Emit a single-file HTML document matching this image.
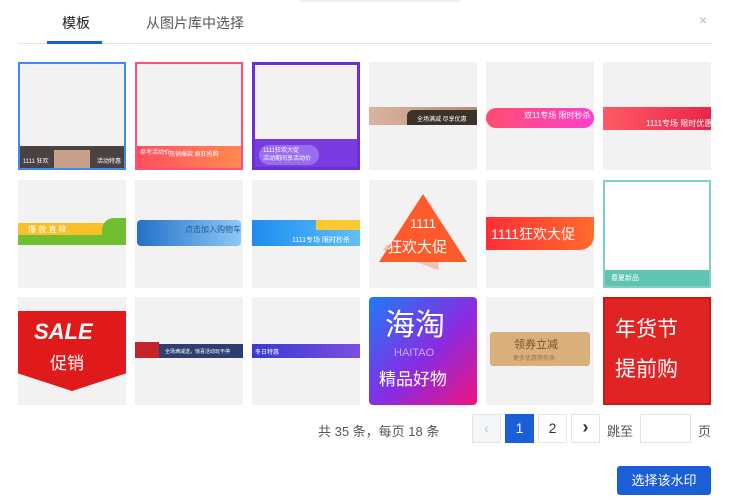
<!DOCTYPE html>
<html><head><meta charset="utf-8"><style>
*{margin:0;padding:0;box-sizing:border-box}
body{width:730px;height:500px;background:#fff;font-family:"Liberation Sans","Noto Sans CJK SC",sans-serif;position:relative;overflow:hidden;color:#333}
.a{position:absolute}
.c{position:absolute;width:108px;height:108px;background:#f2f2f2;overflow:hidden}
.t{position:absolute;color:#fff;white-space:nowrap;font-size:6px}
.pg{position:absolute;top:414px;width:29px;height:29px;border:1px solid #e4e4e4;text-align:center;line-height:27px;font-size:14px;background:#fff}
</style></head><body>
<div class="a" style="left:300px;top:0;width:160px;height:2px;background:#f0f0f0;border-radius:2px"></div>
<div class="a" style="left:62px;top:13px;font-size:14px;color:#222">模板</div>
<div class="a" style="left:146px;top:13px;font-size:14px;color:#555">从图片库中选择</div>
<div class="a" style="left:699px;top:12px;font-size:14px;color:#bbb">×</div>
<div class="a" style="left:18px;top:43px;width:694px;height:1px;background:#e6e6e6"></div>
<div class="a" style="left:47px;top:41px;width:55px;height:3px;background:#1a5fd6"></div>

<!-- row1 -->
<div class="c" style="left:18px;top:62px;border:2px solid #3d8af7">
 <div class="a" style="left:0;bottom:0;width:104px;height:22px;background:#4a4240"></div>
 <div class="a" style="left:34px;bottom:0;width:36px;height:18px;background:#c9a08a"></div>
 <div class="t" style="left:3px;bottom:3px">1111 狂欢</div><div class="t" style="right:3px;bottom:3px">活动特惠</div>
</div>
<div class="c" style="left:135px;top:62px;border:2px solid #ff4f7a">
 <div class="a" style="left:0;bottom:0;width:104px;height:22px;background:linear-gradient(90deg,#ff4f5e,#ff8a50)"></div>
 <div class="t" style="left:3px;bottom:12px">参考活动价</div><div class="t" style="left:32px;bottom:10px">热销爆款 疯狂抢购</div>
</div>
<div class="c" style="left:252px;top:62px;border:3px solid #6a2fd6">
 <div class="a" style="left:0;bottom:0;width:102px;height:28px;background:#7a3ce0"></div>
 <div class="a" style="left:4px;bottom:2px;width:60px;height:20px;border-radius:10px;background:#9a6cf0"></div>
 <div class="t" style="left:8px;bottom:13px">1111狂欢大促</div><div class="t" style="left:8px;bottom:5px">活动期间享活动价</div>
</div>
<div class="c" style="left:369px;top:62px">
 <div class="a" style="left:0;top:45px;width:108px;height:18px;background:linear-gradient(90deg,#d9b4a0,#b88a74)"></div>
 <div class="a" style="left:38px;top:48px;width:70px;height:15px;background:#3c3328;border-radius:6px 0 0 0"></div>
 <div class="t" style="left:48px;top:52px">全场满减 尽享优惠</div>
</div>
<div class="c" style="left:486px;top:62px">
 <div class="a" style="left:0;top:46px;width:108px;height:20px;border-radius:10px;background:linear-gradient(90deg,#ff4d6e,#ff3fcf)"></div>
 <div class="t" style="left:38px;top:48px;font-size:8px">双11专场 限时秒杀</div>
</div>
<div class="c" style="left:603px;top:62px">
 <div class="a" style="left:0;top:45px;width:108px;height:23px;background:linear-gradient(90deg,#ff5a66,#e8264a)"></div>
 <div class="t" style="left:43px;top:56px;font-size:8px">1111专场 限时优惠</div>
</div>
<!-- row2 -->
<div class="c" style="left:18px;top:180px">
 <div class="a" style="left:0;top:43px;width:108px;height:12px;background:#f9c02a"></div>
 <div class="a" style="left:0;top:55px;width:108px;height:10px;background:#6fbf30"></div>
 <div class="a" style="left:84px;top:38px;width:24px;height:17px;border-radius:12px 0 0 0;background:#6fbf30"></div>
 <div class="t" style="left:10px;top:44px;font-size:8px">爆 款 直 降</div>
</div>
<div class="c" style="left:135px;top:180px">
 <div class="a" style="left:2px;top:40px;width:104px;height:26px;border-radius:4px;background:linear-gradient(90deg,#2470c8,#8ec9f5)"></div>
 <div class="t" style="left:50px;top:44px;font-size:8px;color:#1d5ca8">点击加入购物车</div>
</div>
<div class="c" style="left:252px;top:180px">
 <div class="a" style="left:0;top:40px;width:108px;height:26px;background:linear-gradient(90deg,#1c8cf0,#5fbff8)"></div>
 <div class="a" style="left:64px;top:40px;width:44px;height:10px;background:#ffc833"></div>
 <div class="t" style="left:40px;top:55px;font-size:7px">1111专场 限时秒杀</div>
</div>
<div class="c" style="left:369px;top:180px">
 <div class="a" style="left:22px;top:22px;width:60px;height:60px;background:#f7c2b6;transform:rotate(20deg);clip-path:polygon(50% 0,100% 100%,0 100%)"></div>
 <div class="a" style="left:10px;top:14px;width:0;height:0;border-left:44px solid transparent;border-right:44px solid transparent;border-bottom:68px solid #ff5a2c"></div>
 <div class="t" style="left:30px;top:36px;font-size:13px;width:48px;text-align:center">1111</div>
 <div class="t" style="left:18px;top:56px;font-size:15px">狂欢大促</div>
</div>
<div class="c" style="left:486px;top:180px">
 <div class="a" style="left:0;top:37px;width:108px;height:33px;border-radius:0 0 14px 0;background:linear-gradient(90deg,#ff2f37,#ff6b2c)"></div>
 <div class="t" style="left:5px;top:44px;font-size:14px">1111狂欢大促</div>
</div>
<div class="c" style="left:603px;top:180px;background:#fff;border:2px solid #7fd0c6">
 <div class="a" style="left:0;bottom:0;width:104px;height:16px;background:#5fc4b0"></div>
 <div class="t" style="left:6px;bottom:3px;font-size:7px">春夏新品</div>
</div>
<!-- row3 -->
<div class="c" style="left:18px;top:297px">
 <div class="a" style="left:0;top:14px;width:108px;height:80px;background:#e01a1a;clip-path:polygon(0 0,100% 0,100% 78%,50% 100%,0 78%)"></div>
 <div class="t" style="left:16px;top:22px;font-size:22px;font-weight:bold;font-style:italic">SALE</div>
 <div class="t" style="left:32px;top:52px;font-size:17px">促销</div>
</div>
<div class="c" style="left:135px;top:297px">
 <div class="a" style="left:0;top:47px;width:108px;height:14px;background:#2c3f6e"></div>
 <div class="a" style="left:0;top:45px;width:24px;height:16px;background:#c4232b"></div>
 <div class="t" style="left:30px;top:51px;font-size:5px">全场满减送，惊喜活动玩不停</div>
</div>
<div class="c" style="left:252px;top:297px">
 <div class="a" style="left:0;top:47px;width:108px;height:14px;background:linear-gradient(90deg,#3a3ad0,#7a4fe0)"></div>
 <div class="t" style="left:3px;top:50px;font-size:6px">冬日特惠</div>
</div>
<div class="c" style="left:369px;top:297px;border-radius:4px;background:linear-gradient(135deg,#1f7af5,#8a2be2 55%,#f0157a)">
 <div class="t" style="left:16px;top:12px;font-size:30px;line-height:34px">海淘</div>
 <div class="t" style="left:25px;top:50px;font-size:11px;color:#c9a8f8">HAITAO</div>
 <div class="t" style="left:10px;top:68px;font-size:17px">精品好物</div>
</div>
<div class="c" style="left:486px;top:297px">
 <div class="a" style="left:4px;top:35px;width:100px;height:34px;border-radius:3px;background:#d9b07c"></div>
 <div class="t" style="left:28px;top:39px;font-size:11px;color:#7a5230">领券立减</div>
 <div class="t" style="left:27px;top:56px;font-size:6px;color:#9a7250">更多优惠等你来</div>
</div>
<div class="c" style="left:603px;top:297px;background:#e02424;border:2px solid #c81818">
 <div class="t" style="left:10px;top:14px;font-size:21px">年货节</div>
 <div class="t" style="left:10px;top:54px;font-size:21px">提前购</div>
</div>

<div class="a" style="left:318px;top:421px;font-size:13px;color:#555">共 35 条，每页 18 条</div>
<div class="pg" style="left:472px;background:#f5f6f8;color:#c0c4cc">&lsaquo;</div>
<div class="pg" style="left:505px;background:#1a5fd6;border-color:#1a5fd6;color:#fff">1</div>
<div class="pg" style="left:538px">2</div>
<div class="pg" style="left:571px;font-weight:bold;font-size:18px;line-height:25px">&rsaquo;</div>
<div class="a" style="left:607px;top:421px;font-size:13px;color:#555">跳至</div>
<div class="a" style="left:640px;top:414px;width:51px;height:29px;border:1px solid #e4e4e4"></div>
<div class="a" style="left:698px;top:421px;font-size:13px;color:#555">页</div>
<div class="a" style="left:617px;top:466px;width:94px;height:29px;background:#1a5fd6;border-radius:3px;color:#fff;font-size:13px;text-align:center;line-height:29px">选择该水印</div>
</body></html>
